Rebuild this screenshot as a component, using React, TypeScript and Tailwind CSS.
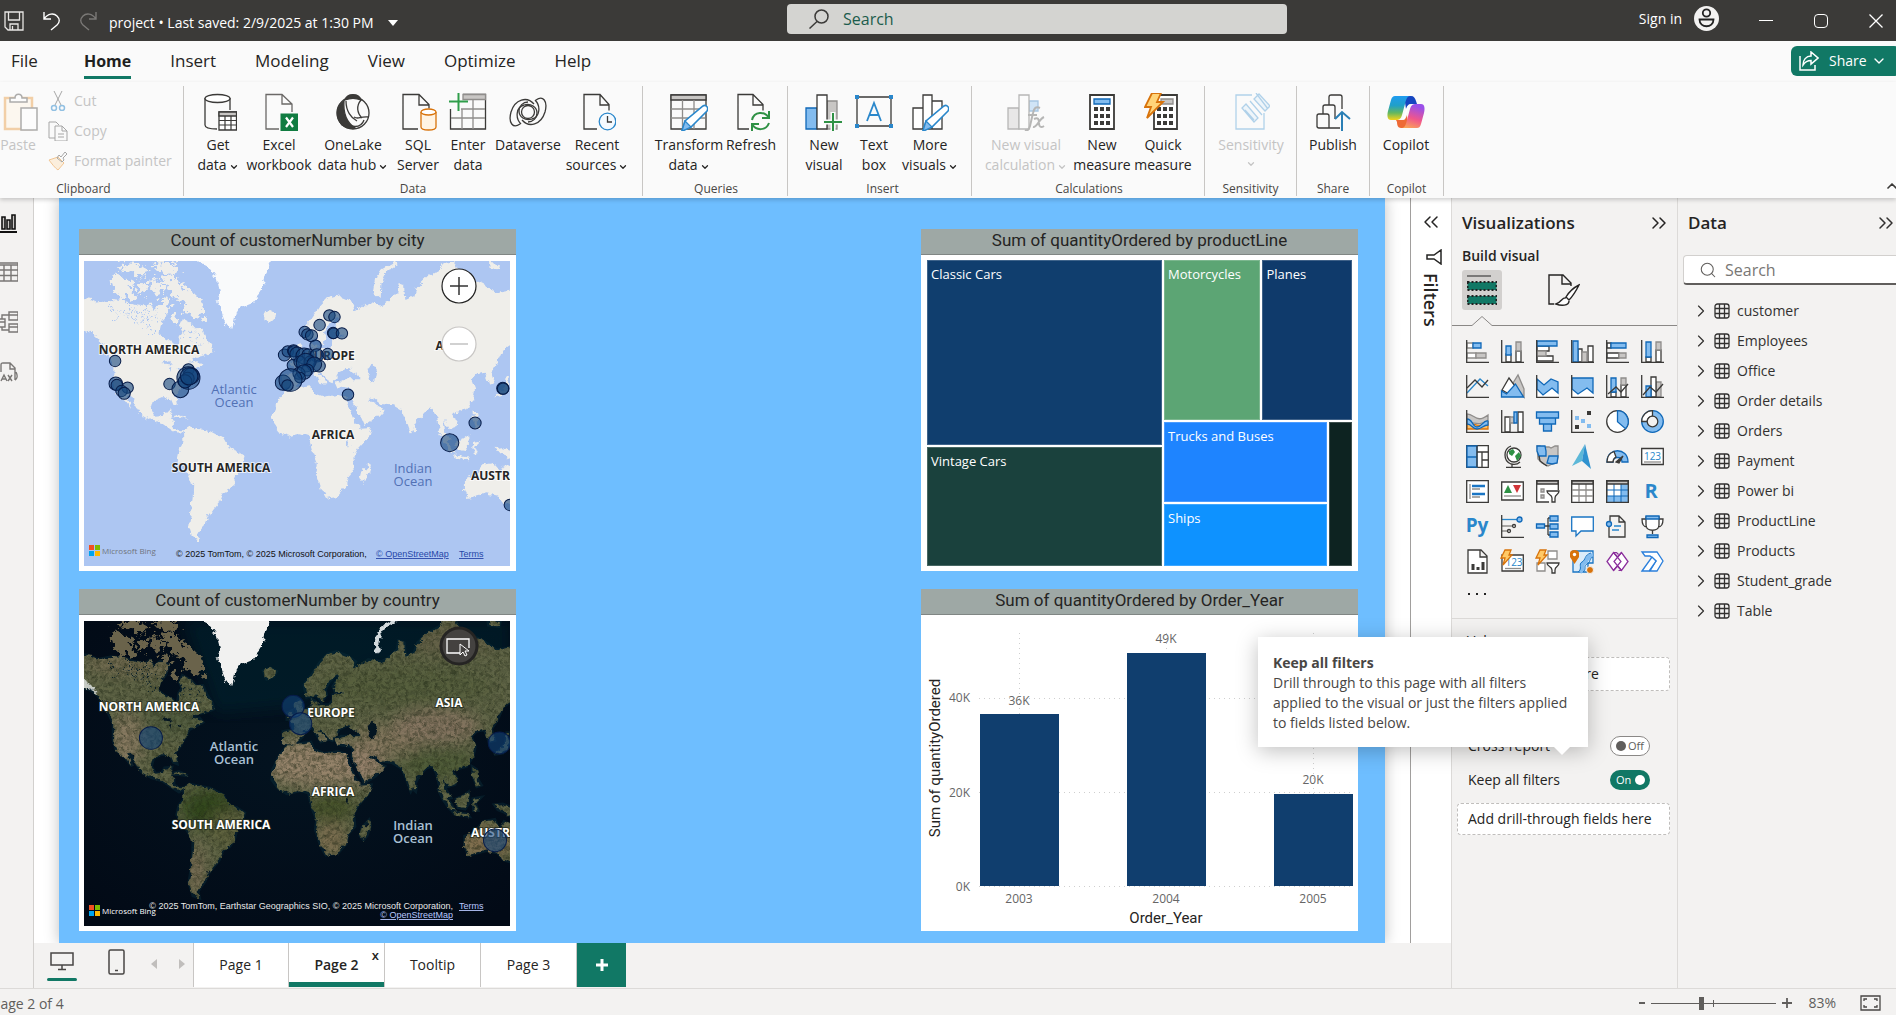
import React from "react";
import {
  ChevronDown,
  ChevronUp,
  ChevronsLeft,
  ChevronsRight,
  ChevronRight,
  Search,
} from "lucide-react";

const D = "#3b3a38";
const B = "#83bcef";
const BS = "#1068b8";
const G = "#c8c6c4";
const GS = "#8f8d8b";

/* ---------- ribbon icons (38 x 38) ---------- */

function RIcon({ children, faded = false }: { children: React.ReactNode; faded?: boolean }) {
  return (
    <svg viewBox="0 0 38 38" fill="none" stroke={D} strokeWidth="1.3" className={faded ? "size-[38px] opacity-35" : "size-[38px]"} aria-hidden="true">
      {children}
    </svg>
  );
}

const ribbonIcons: Record<string, React.ReactNode> = {
  getData: (
    <RIcon>
      <path d="M6 5v27c0 3 5 4 12 4M31 5v12" />
      <ellipse cx="18.500" cy="5.500" rx="12.500" ry="4" fill="#fff" />
      <path d="M20 19h17.500v18H20z" fill="#fff" />
      <path d="M20 19h17.500v4H20z" fill={G} />
      <path d="M20 27.500h17.500M20 32h17.500M26 23v14M32 23v14" strokeWidth="1.200" />
    </RIcon>
  ),
  excel: (
    <RIcon>
      <path d="M19 36H6V1.500h16l10 9.500v8M22 1.500V11h10" stroke="#6b6967" />
      <path d="M20.500 20.500h17.500v17.500h-17.500z" fill="#107c41" stroke="none" />
      <path d="M26 24.500l7 9.500M33 24.500l-7 9.500" stroke="#fff" strokeWidth="2.200" />
    </RIcon>
  ),
  oneLake: (
    <RIcon>
      <circle cx="19" cy="20" r="16" />
      <path d="M11 7C13 0 25 0 27 7c-5-2-11-2-16 0z" fill={D} />
      <path d="M10 8C2 13 1 24 8 32c4 3 9 4 13 3C12 29 9 20 10 8z" fill={D} />
      <path d="M12 8c0 10 5 17 11 20M27 7c-5 6-4 13 1 18M17 33c9 2 12-3 13-6M20 24c5 3 5-1 15 0" />
    </RIcon>
  ),
  sql: (
    <RIcon>
      <path d="M19 36H4V1.500h16l10 10v4M20 1.500v10.500h10" />
      <path d="M22 19v15c0 4 15 4 15 0V19" stroke="#d8730b" fill="#fff4e4" />
      <ellipse cx="29.500" cy="19" rx="7.500" ry="3" stroke="#d8730b" fill="#fff" />
    </RIcon>
  ),
  enter: (
    <RIcon>
      <path d="M14 1.500h22.500v34.500h-35V16" />
      <path d="M14 1.500h22.500v5H14z" fill={G} stroke={GS} />
      <path d="M12 16h24M2 25h34M13 16v20M24 7v29" stroke={GS} />
      <path d="M9.500 -1v19M0 8.500h19" stroke="#2f9e4a" strokeWidth="2" />
    </RIcon>
  ),
  dataverse: (
    <RIcon>
      <circle cx="19" cy="19" r="6.500" />
      <path d="M25 11C18 3 6 6 2 19c-3 11 2 17 9 12M12 31c-6-6-5-17 3-19 7-2 13 2 13 8 0 5-4 9-9 9" />
      <path d="M13 27C20 35 32 32 36 19c3-11-2-17-9-12M26 7c6 6 5 17-3 19-7 2-13-2-13-8 0-5 4-9 9-9" />
    </RIcon>
  ),
  recent: (
    <RIcon>
      <path d="M19 36H6V1.500h16l9 10v6M22 1.500v10.500h9.500" />
      <circle cx="29.500" cy="28.500" r="8.300" stroke="#2a87cb" fill="#f4faff" />
      <path d="M29.500 23v6h4.500" />
    </RIcon>
  ),
  transform: (
    <RIcon>
      <path d="M1 2h35v34H1z" />
      <path d="M1 2h35v5H1z" fill={G} />
      <path d="M1 16h34M1 25h34M12.500 7v29M24 7v29" stroke={GS} />
      <path d="M12 38l3-10 18-15c3-2 6 2 4 5L21 34z" fill="#fff" stroke="#2a87cb" strokeWidth="1.600" />
      <path d="M12 38l3-10 6 6z" fill={B} stroke="#2a87cb" />
    </RIcon>
  ),
  refresh: (
    <RIcon>
      <path d="M17 36H6V1.500h15l10 10v6M21 1.500v10.500h10" />
      <path d="M20 27c2-9 13-9 17-2M37 18v7h-7M37 30c-3 8-13 8-17 1M20 38v-7h7" stroke="#2f9145" strokeWidth="2" />
    </RIcon>
  ),
  newVisual: (
    <RIcon>
      <path d="M22 8h10v28H22z" fill={G} stroke={GS} />
      <path d="M1 15h11v21H1z" fill={B} stroke={BS} />
      <path d="M12 2h10v34H12z" fill="#fff" />
      <path d="M28 19v20M18 29h20" stroke="#fafafa" strokeWidth="5" />
      <path d="M28 20v18M19 29h18" stroke="#2f9145" strokeWidth="2" />
    </RIcon>
  ),
  textBox: (
    <RIcon>
      <path d="M2 4h34v29H2z" />
      <path d="M12 28l7-18 7 18M14.500 22h9" stroke="#2a87cb" strokeWidth="1.800" />
      <path d="M0 2h4v4H0zM34 2h4v4h-4zM0 31h4v4H0zM34 31h4v4h-4z" fill="#2a87cb" stroke="none" />
    </RIcon>
  ),
  moreVisuals: (
    <RIcon>
      <path d="M2 15h10v21H2zM12 2h9v34h-9zM21 8h10v28H21z" fill="#fff" />
      <path d="M12 38l3-10 18-15c3-2 6 2 4 5L21 34z" fill="#fff" stroke="#2a87cb" strokeWidth="1.600" />
      <path d="M12 38l3-10 6 6z" fill={B} stroke="#2a87cb" />
    </RIcon>
  ),
  visualCalc: (
    <RIcon faded>
      <path d="M22 8h9v10h-9z" fill={B} stroke={BS} />
      <path d="M1 15h11v21H1z" fill={G} />
      <path d="M12 2h10v34H12z" fill="#fff" />
      <path d="M33 15c-4-2-6 0-7 5l-3 13c-1 4-3 5-5 4M21 22h9M27 26c4-2 5 0 5 4s2 5 5 3M37 24c-5 2-7 11-11 10" strokeWidth="2" />
    </RIcon>
  ),
  newMeasure: (
    <RIcon>
      <path d="M7 2h24v34H7z" fill="#fff" strokeWidth="1.800" />
      <path d="M11 6h16v5H11z" fill={B} stroke={BS} />
      <path d="M11 16h4M17 16h4M23 16h4M11 23h4M17 23h4M23 23h4M11 30h4M17 30h4M23 30h4" strokeWidth="4" />
    </RIcon>
  ),
  quickMeasure: (
    <RIcon>
      <path d="M10 2h23v34H10z" fill="#fff" strokeWidth="1.800" />
      <path d="M17 6h12v5H17z" fill={G} stroke={GS} />
      <path d="M13 16h4M19 16h4M25 16h4M13 23h4M19 23h4M25 23h4M13 30h4M19 30h4M25 30h4" strokeWidth="4" />
      <path d="M8 0h9l-4 9h6L3 25l4-11H1z" fill="#ffd479" stroke="#d8730b" strokeWidth="1.800" />
    </RIcon>
  ),
  sensitivity: (
    <RIcon faded>
      <path d="M20 2H4v34h28V20" stroke="#2a87cb" />
      <path d="M10 15l12 14 4-4-12-14zM13 17l9 10M22 6l5-5 11 12-5 5zM24 0l12 16M18 8l12 14" stroke="#2a87cb" fill="#d9ecfa" />
    </RIcon>
  ),
  publish: (
    <RIcon>
      <path d="M3 34V23c0-2 1-2 2-2h8c2 0 2 1 2 2v12H5c-2 0-2-1-2-2zM9 21v-7c0-2 1-2 2-2h8c2 0 2 1 2 2v12M15 12V4c0-2 1-2 2-2h9c2 0 2 1 2 2v12M15 35h11" />
      <path d="M28 38V20M21 26l7-7 8 7" stroke="#2a7fb5" strokeWidth="2" />
    </RIcon>
  ),
  copilot: (
    <svg viewBox="0 0 38 38" className="size-[38px]" aria-hidden="true">
      <defs>
        <linearGradient id="cpA" x1="0" y1="0" x2="0" y2="1">
          <stop offset="0" stopColor="#1f9bf0" />
          <stop offset="0.400" stopColor="#20a0c8" />
          <stop offset="0.700" stopColor="#63b760" />
          <stop offset="1" stopColor="#f5d31a" />
        </linearGradient>
        <linearGradient id="cpB" x1="0.300" y1="0" x2="0" y2="1">
          <stop offset="0" stopColor="#9b4fe8" />
          <stop offset="0.500" stopColor="#f0568c" />
          <stop offset="1" stopColor="#fcae50" />
        </linearGradient>
      </defs>
      <path d="M17 3h7c3 0 4 2 5 5l1 3h-6c-3 0-4 2-5 5z" fill="#1545c0" />
      <path d="M21 35h-7c-3 0-4-3-4-6l-1-2h6c3 0 4-2 5-5z" fill="#ee6a35" />
      <path d="M8 3h15c-3 0-4 4-5 8l-3 11c-1 4-3 5-6 5H4c-4 0-4-5-3-9l3-11c1-3 2-4 4-4z" fill="url(#cpA)" />
      <path d="M30 35H15c3 0 4-4 5-8l3-11c1-4 3-5 6-5h5c4 0 4 5 3 9l-3 11c-1 3-2 4-4 4z" fill="url(#cpB)" />
      <path d="M24 11.500c-2 .5-3 2-3.500 4.500l-3 10.500H14.500c2-1 2.500-3 3-5l2.500-7c.5-1.500 2-3 4-3z" fill="#fff" />
    </svg>
  ),
};

/* ---------- ribbon ---------- */

type Item = { icon: string; lines: string[]; w: string; menu?: boolean; off?: boolean };
type Group = { name: string; pad: string; items: Item[] };

const groups: Group[] = [
  {
    name: "Data",
    pad: "w-[459px] pl-1.5",
    items: [
      { icon: "getData", lines: ["Get", "data"], w: "w-14", menu: true },
      { icon: "excel", lines: ["Excel", "workbook"], w: "w-[66px]" },
      { icon: "oneLake", lines: ["OneLake", "data hub"], w: "w-[82px]", menu: true },
      { icon: "sql", lines: ["SQL", "Server"], w: "w-12" },
      { icon: "enter", lines: ["Enter", "data"], w: "w-[52px]" },
      { icon: "dataverse", lines: ["Dataverse"], w: "w-[68px]" },
      { icon: "recent", lines: ["Recent", "sources"], w: "w-[70px]", menu: true },
    ],
  },
  {
    name: "Queries",
    pad: "w-[145px] pl-2",
    items: [
      { icon: "transform", lines: ["Transform", "data"], w: "w-[76px]", menu: true },
      { icon: "refresh", lines: ["Refresh"], w: "w-12" },
    ],
  },
  {
    name: "Insert",
    pad: "w-[184px] pl-3",
    items: [
      { icon: "newVisual", lines: ["New", "visual"], w: "w-12" },
      { icon: "textBox", lines: ["Text", "box"], w: "w-[52px]" },
      { icon: "moreVisuals", lines: ["More", "visuals"], w: "w-[60px]", menu: true },
    ],
  },
  {
    name: "Calculations",
    pad: "w-[233px] pl-2",
    items: [
      { icon: "visualCalc", lines: ["New visual", "calculation"], w: "w-[92px]", menu: true, off: true },
      { icon: "newMeasure", lines: ["New", "measure"], w: "w-[60px]" },
      { icon: "quickMeasure", lines: ["Quick", "measure"], w: "w-[62px]" },
    ],
  },
  {
    name: "Sensitivity",
    pad: "w-[92px] pl-1.5",
    items: [{ icon: "sensitivity", lines: ["Sensitivity", ""], w: "w-20", menu: true, off: true }],
  },
  { name: "Share", pad: "w-[73px] pl-1.5", items: [{ icon: "publish", lines: ["Publish"], w: "w-[60px]" }] },
  { name: "Copilot", pad: "w-[74px] pl-1.5", items: [{ icon: "copilot", lines: ["Copilot"], w: "w-[60px]" }] },
];

function RibbonItem({ item }: { item: Item }) {
  return (
    <button type="button" className={`${item.w} flex shrink-0 flex-col items-center whitespace-nowrap text-sm leading-5 ${item.off ? "text-[#c4c4c4]" : "text-[#252423]"}`}>
      {ribbonIcons[item.icon]}
      <span className="mt-1">{item.lines[0]}</span>
      {item.lines.length > 1 && (
        <span className="flex items-center gap-0.5">
          {item.lines[1]}
          {item.menu && <ChevronDown size={10} strokeWidth={3} className="mt-1" />}
        </span>
      )}
    </button>
  );
}

function Ribbon() {
  return (
    <div className="relative z-10 flex h-[116px] shrink-0 bg-[#fafafa] pt-1 shadow-[0_2px_4px_rgba(0,0,0,0.18)]">
      <section className="flex h-[110px] w-[184px] shrink-0 flex-col justify-between border-r border-[#c8c6c4] text-sm leading-5 text-[#c4c4c4]">
        <div className="flex pt-[7px]">
          <button type="button" className="flex w-9 flex-col items-center">
            <svg viewBox="0 0 38 38" className="ml-1 size-[38px] opacity-40" fill="none" strokeWidth="1.500" stroke={D} aria-hidden="true">
              <path d="M4 5h27v31H4z" stroke="#e8912d" fill="#fff3df" strokeWidth="2.500" />
              <path d="M9 9V5h5c0-5 7-5 7 0h5v4z" fill="#fff" />
              <path d="M20 15h16v22H20z" fill="#fff" />
            </svg>
            <span className="mt-1">Paste</span>
          </button>
          <div className="-mt-[7px] flex flex-col pl-3">
            <button type="button" className="flex h-[30px] items-center gap-1.5">
              <svg viewBox="0 0 20 20" className="size-5 opacity-50" fill="none" stroke="#555" aria-hidden="true">
                <path d="M6 0l7 14M14 0L7 14" />
                <circle cx="6" cy="17" r="2.500" stroke="#2a87cb" strokeWidth="1.500" />
                <circle cx="14" cy="17" r="2.500" stroke="#2a87cb" strokeWidth="1.500" />
              </svg>
              Cut
            </button>
            <button type="button" className="flex h-[30px] items-center gap-1.5">
              <svg viewBox="0 0 20 20" className="size-5 opacity-50" fill="none" stroke="#555" aria-hidden="true">
                <path d="M7 17H1V1h7l3 3M7 5h7l5 5v10H7zM14 5v5h5M10 13h6M10 16h6" />
              </svg>
              Copy
            </button>
            <button type="button" className="flex h-[30px] items-center gap-1.5">
              <svg viewBox="0 0 20 20" className="size-5 opacity-50" fill="none" stroke="#555" aria-hidden="true">
                <path d="M1 9l9-3 6 6-6 7c-3-2-6-6-9-10z" fill="#fde3c0" stroke="#e8912d" />
                <path d="M9 7l2-3 2 2 4-5 2 2-4 4 1 2-2 2z" />
              </svg>
              Format painter
            </button>
          </div>
        </div>
        <h2 className="pr-4 text-center text-xs leading-[14px] text-[#484644]">Clipboard</h2>
      </section>
      {groups.map((g) => (
        <section key={g.name} className={`${g.pad} flex h-[110px] shrink-0 flex-col justify-between border-r border-[#c8c6c4]`}>
          <div className="flex pt-[7px]">
            {g.items.map((i) => (
              <RibbonItem key={i.icon} item={i} />
            ))}
          </div>
          <h2 className="pr-1.5 text-center text-xs leading-[14px] text-[#484644]">{g.name}</h2>
        </section>
      ))}
      <button type="button" aria-label="Collapse ribbon" className="-mr-1 mb-1 ml-auto self-end">
        <ChevronUp size={16} strokeWidth={2.500} color={D} />
      </button>
    </div>
  );
}

/* ---------- title bar and menu tabs ---------- */

function TitleBar() {
  return (
    <header className="grid h-[41px] shrink-0 grid-cols-[787px_minmax(0,500px)_1fr] items-center bg-[#3b3a38] text-sm text-white">
      <div className="flex items-center pl-1">
        <button type="button" aria-label="Save">
          <svg viewBox="0 0 20 20" className="size-5" fill="none" stroke="#e8e6e4" strokeWidth="1.300" aria-hidden="true">
            <path d="M1 1h18v18H4l-3-3zM4.500 1v8h11V1M6 19v-6h8v6M8.500 19v-4" />
          </svg>
        </button>
        <button type="button" aria-label="Undo" className="ml-[18px]">
          <svg viewBox="0 0 20 20" className="size-5" fill="none" stroke="#fff" strokeWidth="1.400" aria-hidden="true">
            <path d="M2 1v7h7M2 8c4-6 10-6 13-3s3 6 0 9l-6 5" />
          </svg>
        </button>
        <button type="button" aria-label="Redo" className="ml-4">
          <svg viewBox="0 0 20 20" className="size-5" fill="none" stroke="#7b7977" strokeWidth="1.400" aria-hidden="true">
            <path d="M18 1v7h-7M18 8C14 2 8 2 5 5s-3 6 0 9l6 5" />
          </svg>
        </button>
        <button type="button" className="ml-[11px] mt-1 flex items-center gap-3.5 whitespace-nowrap">
          project • Last saved: 2/9/2025 at 1:30 PM
          <svg viewBox="0 0 10 6" className="h-1.5 w-2.5" fill="#fff" aria-hidden="true">
            <path d="M0 0h10L5 6z" />
          </svg>
        </button>
      </div>
      <label className="-mt-1 flex h-[30px] items-center gap-3.5 rounded-sm bg-[#d4d4d1] pl-[22px]">
        <svg viewBox="0 0 20 20" className="size-5 shrink-0" fill="none" stroke="#3b3a38" strokeWidth="1.500" aria-hidden="true">
          <circle cx="12.500" cy="7.500" r="6.500" />
          <path d="M8 12.500L.5 19.500" />
        </svg>
        <input type="search" aria-label="Search" placeholder="Search" className="w-full bg-transparent text-base text-[#1c5c4c] outline-none placeholder:text-[#1c5c4c]" />
      </label>
      <div className="-mt-1 flex items-center justify-end pr-[13px]">
        <button type="button" className="flex items-center gap-3 whitespace-nowrap">
          Sign in
          <svg viewBox="0 0 25 25" className="size-[25px]" fill="none" stroke="#222" strokeWidth="1.800" aria-hidden="true">
            <circle cx="12.500" cy="12.500" r="12.500" fill="#f3f2f1" stroke="none" />
            <circle cx="12.500" cy="7" r="3.700" />
            <path d="M5.500 13.500h14c0 9-14 9-14 0z" />
          </svg>
        </button>
        <button type="button" aria-label="Minimize" className="ml-10 mt-1 flex h-4 w-[14px] items-center">
          <span className="h-px w-full bg-white" />
        </button>
        <button type="button" aria-label="Maximize" className="ml-[41px] mt-1 size-[14px] rounded-sm border border-white" />
        <button type="button" aria-label="Close" className="ml-[41px] mt-1">
          <svg viewBox="0 0 14 14" className="size-[14px]" stroke="#fff" strokeWidth="1.300" aria-hidden="true">
            <path d="M.5 .5l13 13M13.500 .5l-13 13" />
          </svg>
        </button>
      </div>
    </header>
  );
}

function MenuTabs() {
  return (
    <nav className="flex h-[41px] shrink-0 items-start bg-[#fafafa] pl-[11px] text-[17px] leading-6 text-[#252423]">
      <button type="button" className="mr-[46px] pt-2">File</button>
      <div className="flex items-start gap-[39px]">
        <button type="button" className="border-b-[3px] border-[#117865] pb-[3px] pt-2 text-base font-bold leading-6 text-[#201f1e]">Home</button>
        {["Insert", "Modeling", "View", "Optimize", "Help"].map((t) => (
          <button key={t} type="button" className="pt-2">{t}</button>
        ))}
      </div>
      <button type="button" className="-mr-1 ml-auto mt-[5px] flex h-[30px] w-[109px] items-center gap-2.5 rounded-md bg-[#117865] pl-2 text-sm text-white">
        <svg viewBox="0 0 20 20" className="size-5" fill="none" stroke="#fff" strokeWidth="1.500" aria-hidden="true">
          <path d="M1 5v14h15v-5M12 5V1l7 6-7 6V9.500C8 9.500 6 11 4 14c0-5 3-9 8-9z" />
        </svg>
        <span className="flex items-center gap-1">
          Share
          <ChevronDown size={16} strokeWidth={2} />
        </span>
      </button>
    </nav>
  );
}

/* ---------- maps ---------- */

const ARCTIC = [
  "M480 245L510 240 530 262 562 282 592 312 607 345 596 376 572 358 546 350 540 320 515 305 500 282Z",
  "M330 248L350 236 382 252 408 292 390 312 350 302 335 275Z",
  "M342 212L370 200 400 204 430 218 424 240 390 232Z",
  "M440 208L500 198 532 216 520 236 470 228Z",
  "M450 250L482 252 484 290 462 300 446 272Z",
  "M412 250L436 262 432 296 412 288Z",
  "M455 195L530 195 500 205Z",
  "M496 355L520 350 528 370 508 380Z",
  "M470 318L498 308 506 326 486 336Z",
].join("");

const ICE =
  "M1104 288L1110 250 1130 220 1172 196 1176 206 1142 230 1126 264 1124 306Z";

const LAND = [
  "M240 305L265 308 290 320 330 312 370 316 400 327 430 332 445 322 455 342 475 325 500 335 490 365 470 392 466 412 490 430 512 440 518 458 527 440 530 420 540 405 532 388 540 368 565 382 582 400 600 398 612 425 628 450 632 468 608 478 585 482 560 500 590 495 600 508 578 520 560 530 546 555 535 578 518 598 524 632 514 628 505 606 480 603 455 614 448 640 460 662 480 660 488 645 508 643 500 672 515 678 514 695 530 706 546 705 530 716 508 702 482 684 450 674 420 656 402 630 386 604 375 596 392 640 370 612 345 592 336 562 336 512 326 490 310 460 292 430 272 412 240 402Z",
  "M780 354L800 345 818 355 810 370 790 378Z",
  "M545 705L562 694 590 700 622 706 660 726 676 756 700 764 724 780 716 808 700 832 694 858 680 880 660 890 648 922 630 944 616 962 606 986 594 1002 586 1016 590 1034 572 1028 560 990 566 950 571 900 572 862 558 838 540 810 524 785 530 758 546 738Z",
  "M850 578L872 574 920 568 928 590 960 602 1000 596 1024 604 1036 642 1052 680 1070 698 1098 696 1090 722 1060 756 1046 782 1050 820 1030 842 1024 872 1000 900 965 906 950 880 934 830 938 800 926 770 918 740 914 720 890 712 850 722 824 706 805 680 808 650 826 610Z",
  "M1092 802L1096 818 1086 848 1076 860 1066 848 1072 824Z",
  "M838 536L872 530 866 510 856 500 880 492 896 476 912 466 926 455 922 438 932 444 945 457 975 455 986 440 986 426 1010 424 1020 416 992 416 986 400 1004 372 996 364 975 385 962 410 966 425 952 446 940 428 925 427 908 432 900 396 920 370 946 330 970 304 996 296 1030 310 1052 326 1040 346 1072 336 1090 320 1130 326 1152 314 1176 290 1180 264 1196 270 1200 312 1226 300 1236 270 1262 244 1300 222 1320 200 1345 195 1362 236 1400 250 1430 264 1470 292 1520 282 1520 440 1488 462 1472 500 1454 528 1464 562 1448 566 1434 530 1410 534 1394 550 1406 580 1400 610 1380 640 1352 648 1336 652 1352 676 1346 694 1326 700 1312 670 1318 708 1334 734 1320 736 1302 702 1292 660 1280 638 1260 646 1240 668 1228 692 1216 714 1202 674 1190 646 1160 628 1126 624 1106 608 1092 604 1108 626 1138 640 1112 668 1078 690 1062 652 1042 612 1046 592 1040 580 1000 574 994 560 1010 550 1064 550 1060 536 1030 516 1004 528 994 546 984 562 970 556 950 526 944 532 966 560 950 566 926 524 906 530 894 552 872 574 850 574 838 570Z",
  "M872 455L886 440 896 465 906 490 880 500 866 496 880 478Z",
  "M850 480L864 474 864 494 850 498Z",
  "M1462 604L1478 592 1496 572 1500 540 1509 540 1506 576 1488 600Z",
  "M1296 706L1312 722 1334 752 1346 776 1332 768 1312 740Z",
  "M1340 776L1384 784 1388 790 1346 784Z",
  "M1350 738L1370 730 1386 718 1388 750 1376 768 1356 764Z",
  "M1398 642L1410 650 1412 676 1424 696 1412 700 1400 668Z",
  "M1400 738L1422 734 1406 750 1414 772 1402 772Z",
  "M1464 756L1488 754 1520 766 1520 796 1494 778 1474 770Z",
  "M1376 850L1400 842 1432 806 1464 800 1478 832 1492 806 1520 820 1520 930 1490 920 1474 900 1440 892 1386 906 1376 880Z",
  "M1444 200L1480 205 1476 220 1446 216Z",
  "M1224 696L1232 700 1230 714 1224 708Z",
  "M500 664L530 656 556 668 530 664Z",
].join("");

const GREENLAND =
  "M576 190L800 190 782 256 772 290 746 322 712 336 696 362 688 398 670 390 656 350 640 318 652 290 642 248 618 214Z";
const INLAND_SEA = "M1088 518L1104 506 1116 528 1110 562 1096 556ZM478 500L500 494 512 506 496 504ZM502 512L510 510 508 528ZM520 516L540 512 528 522ZM1024 738L1036 736 1030 752Z";
const LAKES = "M330 330L350 372M380 322L402 350 398 392M420 345L440 392 452 420M430 330L470 350 460 380M400 345L470 368M360 345L420 380M540 420L580 410M560 440L600 440";

type Dot = [number, number, number];

function Bubbles({ dots }: { dots: Dot[] }) {
  return (
    <g fill="#12447c" fillOpacity="0.600" stroke="#071c49" strokeWidth="3">
      {dots.map(([x, y, r]) => (
        <circle key={`${x}-${y}`} cx={x} cy={y} r={r} />
      ))}
    </g>
  );
}

const cityDots: Dot[] = [
  [341, 495, 17], [343, 563, 20], [346, 567, 17], [378, 575, 17], [360, 585, 17], [368, 592, 18],
  [502, 564, 17], [558, 520, 17], [534, 580, 25], [558, 546, 34], [566, 540, 24], [556, 548, 19], [548, 556, 20], [560, 541, 26],
  [975, 358, 17], [990, 363, 17], [946, 387, 17], [902, 408, 17], [910, 415, 17], [922, 419, 18], [986, 411, 17], [987, 412, 16],
  [1012, 412, 17], [934, 449, 17], [842, 477, 18], [852, 466, 17], [869, 464, 18], [870, 466, 17], [880, 475, 22], [900, 480, 24], [912, 476, 18],
  [938, 478, 20], [970, 474, 17], [945, 510, 18], [868, 508, 18], [888, 498, 18], [918, 498, 18], [905, 500, 28], [930, 505, 22],
  [910, 522, 18], [885, 532, 18], [900, 528, 22], [888, 545, 16], [838, 560, 23], [860, 552, 34], [851, 568, 17],
  [1030, 596, 17], [1488, 577, 18], [1489, 578, 17], [1406, 681, 18], [1331, 740, 27], [1509, 927, 17],
];
const countryDots: Dot[] = [
  [447, 546, 34], [868, 451, 33], [890, 503, 33], [1478, 561, 33], [1465, 853, 34],
];

function BingMark({ y, fill }: { y: number; fill: string }) {
  return (
    <g>
      <path d={`M5 ${y}h5v5h-5z`} fill="#f25022" />
      <path d={`M11 ${y}h5v5h-5z`} fill="#7fba00" />
      <path d={`M5 ${y + 6}h5v5h-5z`} fill="#00a4ef" />
      <path d={`M11 ${y + 6}h5v5h-5z`} fill="#ffb900" />
      <text x="18" y={y + 9} fontSize="8" fill={fill}>Microsoft Bing</text>
    </g>
  );
}

function MapLabels({ dy, dark }: { dy: number; dark: boolean }) {
  return (
    <g textAnchor="middle" transform={`translate(0 ${dy})`}>
      <g
        fontSize="12"
        fontWeight="700"
        fill={dark ? "#ffffff" : "#262626"}
        stroke={dark ? "#20281c" : "#ffffff"}
        strokeWidth="2"
        strokeOpacity="0.700"
        paintOrder="stroke"
      >
        <text x="65" y="93">NORTH AMERICA</text>
        <text x="247" y="99">EUROPE</text>
        <text x="365" y="89">ASIA</text>
        <text x="249" y="178">AFRICA</text>
        <text x="137" y="211">SOUTH AMERICA</text>
        <text x="387" y="219" textAnchor="start">AUSTRALIA</text>
      </g>
      <g fontSize="13" fill={dark ? "#a9c0d4" : "#5271b5"} fontWeight={dark ? 600 : 400}>
        <text x="150" y="133">Atlantic</text>
        <text x="150" y="146">Ocean</text>
        <text x="329" y="212">Indian</text>
        <text x="329" y="225">Ocean</text>
      </g>
    </g>
  );
}

function CityMap() {
  return (
    <svg viewBox="0 0 426 305" className="block h-auto w-full overflow-hidden" role="img" aria-label="Map of customers by city">
      <defs>
        <filter id="coast" x="-5%" y="-5%" width="110%" height="110%" colorInterpolationFilters="sRGB">
          <feTurbulence type="fractalNoise" baseFrequency="0.05" numOctaves="4" seed="4" result="n" />
          <feDisplacementMap in="SourceGraphic" in2="n" scale="22" xChannelSelector="R" yChannelSelector="G" />
        </filter>
        <filter id="islands" x="-10%" y="-10%" width="120%" height="120%" colorInterpolationFilters="sRGB">
          <feTurbulence type="fractalNoise" baseFrequency="0.06" numOctaves="4" seed="9" result="n" />
          <feDisplacementMap in="SourceGraphic" in2="n" scale="60" xChannelSelector="R" yChannelSelector="G" />
        </filter>
      </defs>
      <rect width="426" height="305" fill="#adc6f2" />
      <g transform="scale(0.338 0.3333) translate(-249 -195)">
        <path d={ARCTIC} fill="#efeeea" filter="url(#islands)" />
        <g filter="url(#coast)">
          <path d={LAND} fill="#efeeea" />
          <path d={ICE} fill="#efeeea" />
          <path d={GREENLAND} fill="#f9fafb" />
          <path d={INLAND_SEA} fill="#adc6f2" />
        </g>
        <path d={LAKES} fill="none" stroke="#adc6f2" strokeWidth="5" strokeDasharray="9 11 4 8" filter="url(#islands)" />
      </g>
      <MapLabels dy={0} dark={false} />
      <g transform="scale(0.338 0.3333) translate(-249 -195)">
        <Bubbles dots={cityDots} />
      </g>
      <circle cx="375" cy="25" r="17" fill="#fff" stroke="#222" strokeWidth="1.200" />
      <path d="M366 25h18M375 16v18" stroke="#333" strokeWidth="1.500" />
      <circle cx="375" cy="83" r="17" fill="#fff" stroke="#c8c6c4" strokeWidth="1.200" />
      <path d="M366 83h18" stroke="#c2c2c2" strokeWidth="1.500" />
      <BingMark y={284} fill="#70757d" />
      <g fontSize="9" fontFamily="Liberation Sans, Arial, sans-serif" fill="#111">
        <text x="92" y="296">© 2025 TomTom, © 2025 Microsoft Corporation,</text>
        <a href="#osm"><text x="292" y="296" fill="#2746a8" textDecoration="underline">© OpenStreetMap</text></a>
        <a href="#terms"><text x="375" y="296" fill="#2746a8" textDecoration="underline">Terms</text></a>
      </g>
    </svg>
  );
}

function CountryMap() {
  return (
    <svg viewBox="0 0 426 305" className="block h-auto w-full overflow-hidden" role="img" aria-label="Map of customers by country">
      <defs>
        <filter id="terrain" x="0" y="0" width="100%" height="100%" colorInterpolationFilters="sRGB">
          <feTurbulence type="fractalNoise" baseFrequency="0.09" numOctaves="4" seed="8" />
          <feColorMatrix values="0 0 0 0 0.12  0 0 0 0 0.15  0 0 0 0 0.08  1.200 0 0 0 -0.420" />
        </filter>
        <filter id="soft"><feGaussianBlur stdDeviation="20" /></filter>
        <radialGradient id="deep" cx="0.500" cy="0.450" r="0.700">
          <stop offset="0" stopColor="#031320" />
          <stop offset="1" stopColor="#020a16" />
        </radialGradient>
        <clipPath id="landClip"><path d={LAND} /></clipPath>
      </defs>
      <rect width="426" height="305" fill="url(#deep)" />
      <g transform="scale(0.338 0.3333) translate(-249 -204)">
        <path d="M540 200H1509V320L1100 340 860 460 640 480 600 360Z" fill="#06222e" opacity="0.600" filter="url(#soft)" />
        <path d={LAND} fill="none" stroke="#0a2a36" strokeWidth="10" opacity="0.500" />
        <path d={ARCTIC} fill="#6a634b" filter="url(#islands)" />
        <g filter="url(#coast)">
          <g clipPath="url(#landClip)">
            <rect x="240" y="190" width="1290" height="860" fill="#5f6446" />
            <g filter="url(#soft)">
              <ellipse cx="400" cy="330" rx="160" ry="40" fill="#716a50" />
              <ellipse cx="375" cy="560" rx="45" ry="80" fill="#877960" />
              <ellipse cx="520" cy="500" rx="90" ry="50" fill="#525d3f" />
              <ellipse cx="620" cy="770" rx="85" ry="60" fill="#33471f" />
              <ellipse cx="670" cy="830" rx="50" ry="60" fill="#5f623c" />
              <ellipse cx="580" cy="950" rx="25" ry="80" fill="#7a6d54" />
              <ellipse cx="940" cy="630" rx="170" ry="70" fill="#95836b" />
              <ellipse cx="1080" cy="630" rx="60" ry="60" fill="#94806a" />
              <ellipse cx="980" cy="765" rx="70" ry="40" fill="#46532b" />
              <ellipse cx="980" cy="860" rx="50" ry="50" fill="#7a6d50" />
              <ellipse cx="1150" cy="560" rx="100" ry="45" fill="#81745b" />
              <ellipse cx="1290" cy="520" rx="130" ry="50" fill="#857560" />
              <ellipse cx="1200" cy="400" rx="260" ry="60" fill="#575f3e" />
              <ellipse cx="1330" cy="260" rx="160" ry="45" fill="#646047" />
              <ellipse cx="1300" cy="635" rx="110" ry="45" fill="#4f5b38" />
              <ellipse cx="1440" cy="870" rx="80" ry="50" fill="#83704f" />
            </g>
            <rect x="240" y="190" width="1290" height="860" filter="url(#terrain)" />
          </g>
          <path d={GREENLAND} fill="#f1f1f0" />
          <path d="M1120 300C1104 256 1128 216 1174 200" fill="none" stroke="#d3dadd" strokeWidth="11" />
          <path d="M240 378L270 396 288 424 240 398Z" fill="#e4e7e6" opacity="0.800" />
          <path d={INLAND_SEA} fill="#041521" />
        </g>
        <path d={LAKES} fill="none" stroke="#0b2028" strokeWidth="4" strokeDasharray="9 11 4 8" filter="url(#islands)" />
      </g>
      <MapLabels dy={-3} dark />
      <g transform="scale(0.338 0.3333) translate(-249 -195)">
        <Bubbles dots={countryDots} />
      </g>
      <circle cx="375" cy="25" r="18" fill="#444240" stroke="#252423" strokeWidth="3" />
      <path d="M377 32h-14V18h22v9" fill="none" stroke="#fff" strokeWidth="1.300" />
      <path d="M376 23v11l3-3 2 4 2-1-2-4h4z" fill="#444240" stroke="#fff" strokeWidth="1" />
      <BingMark y={284} fill="#fff" />
      <g fontSize="9" fontFamily="Liberation Sans, Arial, sans-serif" fill="#e8e8e8">
        <text x="369" y="288" textAnchor="end">© 2025 TomTom, Earthstar Geographics SIO, © 2025 Microsoft Corporation,</text>
        <a href="#osm"><text x="369" y="297" textAnchor="end" fill="#b8c8ff" textDecoration="underline">© OpenStreetMap</text></a>
        <a href="#terms"><text x="375" y="288" fill="#b8c8ff" textDecoration="underline">Terms</text></a>
      </g>
    </svg>
  );
}

/* ---------- charts ---------- */

function Cell({ label, className }: { label: string; className: string }) {
  return <div className={`${className} min-h-0 min-w-0 px-1 pt-[5px] text-[13px] leading-[18px] text-white ring-1 ring-inset ring-white/20`}>{label}</div>;
}

function Treemap() {
  return (
    <div className="grid h-[306px] grid-cols-[235fr_188fr] gap-0.5">
      <div className="grid grid-rows-[185fr_119fr] gap-0.5">
        <Cell label="Classic Cars" className="bg-[#103e6e]" />
        <Cell label="Vintage Cars" className="bg-[#1a413d]" />
      </div>
      <div className="grid grid-rows-[160fr_144fr] gap-0.5">
        <div className="grid grid-cols-[97fr_90fr] gap-0.5">
          <Cell label="Motorcycles" className="bg-[#5ca574]" />
          <Cell label="Planes" className="bg-[#0f3a6b]" />
        </div>
        <div className="grid grid-cols-[165fr_23fr] gap-0.5">
          <div className="grid grid-rows-[81fr_62fr] gap-0.5">
            <Cell label="Trucks and Buses" className="bg-[#1e84ff]" />
            <Cell label="Ships" className="bg-[#0e92ff]" />
          </div>
          <Cell label="" className="bg-[#0d2321]" />
        </div>
      </div>
    </div>
  );
}

const bars = [
  { year: "2003", label: "36K", x: 59, top: 99, ly: 90 },
  { year: "2004", label: "49K", x: 206, top: 38, ly: 28 },
  { year: "2005", label: "20K", x: 353, top: 179, ly: 169 },
];

function YearChart() {
  return (
    <svg viewBox="0 0 437 316" className="block h-auto w-full" role="img" aria-label="Quantity ordered per year">
      <g stroke="#cfcfcf" strokeDasharray="1 4">
        <path d="M58 83.500H432M58 177.500H432M58 271.500H432" />
        <path d="M98.500 18V99M245.500 18V38M392.500 18V179" />
      </g>
      <g fontSize="12" fill="#666">
        <text x="49" y="87" textAnchor="end">40K</text>
        <text x="49" y="182" textAnchor="end">20K</text>
        <text x="49" y="276" textAnchor="end">0K</text>
        {bars.map((b) => (
          <g key={b.year} textAnchor="middle">
            <rect x={b.x} y={b.top} width="79" height={271 - b.top} fill="#103e6e" />
            <text x={b.x + 39} y={b.ly}>{b.label}</text>
            <text x={b.x + 39} y="288">{b.year}</text>
          </g>
        ))}
      </g>
      <g fontSize="15" fill="#252423" fontFamily="Roboto, sans-serif" textAnchor="middle">
        <text x="245" y="308">Order_Year</text>
        <text transform="translate(19 143) rotate(-90)">Sum of quantityOrdered</text>
      </g>
    </svg>
  );
}

function Card({ title, pad, children }: { title: string; pad: string; children: React.ReactNode }) {
  return (
    <article className="bg-white">
      <h3 className="h-[26px] whitespace-nowrap border-b border-[#808684] bg-[#9ea8a5] text-center font-[Roboto] text-[17px] leading-[22px] text-[#252423]">{title}</h3>
      <div className={pad}>{children}</div>
    </article>
  );
}

/* ---------- left rail ---------- */

function LeftRail() {
  const cls = "h-6 w-[26px] -ml-2";
  return (
    <nav className="flex w-[34px] shrink-0 flex-col gap-[26px] border-r border-[#d2d0ce] bg-[#f3f2f1] pt-3">
      <button type="button" aria-label="Report view">
        <svg viewBox="0 0 26 24" className={cls} fill="none" stroke="#111" strokeWidth="1.600" aria-hidden="true">
          <path d="M4 2v20h21" strokeWidth="2" />
          <path d="M10 7h3v12h-3zM15 10h3v9h-3zM20 5h3v14h-3z" fill={G} />
        </svg>
      </button>
      <button type="button" aria-label="Table view">
        <svg viewBox="0 0 26 24" className={cls} fill="none" stroke="#797775" strokeWidth="1.400" aria-hidden="true">
          <path d="M2 3h24v18H2zM2 5h24M2 10h24M2 15.500h24M12 5v16M19 5v16" />
        </svg>
      </button>
      <button type="button" aria-label="Model view">
        <svg viewBox="0 0 26 24" className={cls} fill="none" stroke="#797775" strokeWidth="1.400" aria-hidden="true">
          <path d="M17 2h9v8h-9zM17 5h9M17 14h9v8h-9zM17 17h9M4 9h9v8H4zM4 12h9M10 9V5h7M10 17v3h7" />
        </svg>
      </button>
      <button type="button" aria-label="DAX query view">
        <svg viewBox="0 0 26 24" className={cls} fill="none" stroke="#797775" strokeWidth="1.400" aria-hidden="true">
          <path d="M9 12V5c0-2 1-2 2-2h7l5 5v12M18 3v6h5M24 12c2 4 1 7-1 8M4 15v6M9 21l3-6 3 6M10 19h4M16 15l4 6M20 15l-4 6" />
        </svg>
      </button>
    </nav>
  );
}

/* ---------- visualization gallery (23 x 23 icons) ---------- */

const Axis = () => <path d="M.7 0V22.300H23" />;

const gallery: [string, React.ReactNode][] = [
  ["Stacked bar chart", <><path d="M1 3h6v5H1zM1 13h9v5H1z" fill="#fff" stroke={GS} /><path d="M7 3h8v5H7z" fill={B} stroke={BS} /><path d="M10 13h10v5H10z" fill={G} stroke={GS} /><Axis /></>],
  ["Stacked column chart", <><path d="M5 14h5v8H5zM15 11h5v11h-5z" fill="#fff" /><path d="M5 6h5v9H5z" fill={B} stroke={BS} /><path d="M15 2h5v9h-5z" fill={G} stroke={GS} /><Axis /></>],
  ["Clustered bar chart", <><path d="M1 6h12v5H1zM1 16h16v5H1z" fill="#fff" /><path d="M1 11h9v5H1z" fill={G} stroke={GS} /><path d="M1 1h20v5H1z" fill={B} stroke={BS} /><Axis /></>],
  ["Clustered column chart", <><path d="M7 9h4v13H7zM17 6h5v16h-5z" fill="#fff" /><path d="M11 12h5v10h-5z" fill={G} stroke={GS} /><path d="M2 1h5v21H2z" fill={B} stroke={BS} /><Axis /></>],
  ["100% stacked bar chart", <><path d="M1 3h4v5H1zM1 13h12v5H1z" fill="#fff" /><path d="M5 3h15v5H5z" fill={B} stroke={BS} /><path d="M13 13h7v5h-7z" fill={G} stroke={GS} /><Axis /></>],
  ["100% stacked column chart", <><path d="M5 17h5v5H5zM15 10h5v12h-5z" fill="#fff" /><path d="M5 2h5v15H5z" fill={B} stroke={BS} /><path d="M15 2h5v8h-5z" fill={G} stroke={GS} /><Axis /></>],
  ["Line chart", <><path d="M1 18L14 4l8 7" stroke="#2a87cb" /><path d="M1 13l8-8 7 7 6-7" /><Axis /></>],
  ["Area chart", <><path d="M12 8l5-8 6 14v8z" fill={G} stroke={GS} /><path d="M1 15L8 3l6 8-6 8z" fill="#fff" /><path d="M.5 22v-6l5 3 9-10 8 13z" fill={B} stroke={BS} /></>],
  ["Stacked area chart", <><path d="M1 15l6 5 9-7 6 5v4H1z" fill="#fff" stroke="none" /><path d="M1 4l7 6 7-6 7 3v11l-6-5-9 7-6-6z" fill={B} stroke={BS} /><Axis /></>],
  ["100% stacked area chart", <><path d="M1 15l6 4 9-6 7 5v4H1z" fill="#fff" stroke="none" /><path d="M1 3h21v15l-6-5-9 6-6-5z" fill={B} stroke={BS} /><Axis /></>],
  ["Line and stacked column chart", <><path d="M5 17h5v5H5zM15 10h5v12h-5z" fill="#fff" /><path d="M5 3h5v14H5z" fill={B} stroke={BS} /><path d="M15 3h5v7h-5z" fill={G} stroke={GS} /><path d="M2 19l8-7 5 5 7-8" /><Axis /></>],
  ["Line and clustered column chart", <><path d="M15 7h5v15h-5z" fill={G} stroke={GS} /><path d="M10 2h5v20h-5z" fill="#fff" /><path d="M5 11h5v11H5z" fill={B} stroke={BS} /><path d="M2 20l7-8 6 5 7-8" /><Axis /></>],
  ["Ribbon chart", <><path d="M1 13c8 0 12 6 21-1v7H1z" fill="#ffbf66" stroke="#d8730b" /><path d="M1 4c8 0 9 10 21 1v5c-8 6-12 3-21 2z" fill={G} stroke={GS} /><path d="M1 9c6 0 5 8 10 8s6-7 11-6v4c-5 0-6 4-11 4S6 14 1 14z" fill={B} stroke={BS} /><Axis /></>],
  ["Waterfall chart", <><path d="M4 7h5v15H4zM17 2h5v20h-5z" fill="#fff" /><path d="M9 7h4v6H9z" fill={G} stroke={GS} /><path d="M13 2h3v11h-3z" fill={B} stroke={BS} /><Axis /></>],
  ["Funnel", <g fill={B} stroke={BS}><path d="M.5 2h22v6H.5zM3.500 8h16v6h-16zM7.500 14h8v7h-8z" /></g>],
  ["Scatter chart", <><g stroke="none"><path d="M4 6h4v4H4zM10 9h4v4h-4zM16 14h4v4h-4z" fill={B} /><path d="M16 1h4v4h-4zM4 15h4v4H4z" fill={D} /></g><Axis /></>],
  ["Pie chart", <><circle cx="11.500" cy="11.500" r="10.800" fill="#fff" /><path d="M11.500 .7a10.800 10.800 0 018 18l-8-7z" fill={B} stroke={BS} /></>],
  ["Donut chart", <><circle cx="11.500" cy="11.500" r="10.800" fill={B} stroke={BS} /><path d="M11.500 .7A10.800 10.800 0 00.7 11.500h5.500a5.300 5.300 0 015.300-5.300z" fill="#fff" /><circle cx="11.500" cy="11.500" r="5.300" fill="#f3f2f1" /></>],
  ["Treemap", <><path d="M.7 .7h21.600v21.600H.7z" fill="#fff" /><path d="M1 1h10v11H1zM1 12h10v10H1z" fill={B} stroke={BS} /><path d="M11 7h11M16 7v15M16 15h6M11 1v21" /></>],
  ["Map", <><circle cx="13" cy="10" r="7" fill="#fff" /><path d="M8 6l4-2 2 3-3 4-3-2zM14 11l4-4 2 4-4 5z" fill="#2f9145" stroke="none" /><path d="M10 1C2 4 2 16 10 19c4 1 7 0 9-2M11 19v3M5 22.300h15" /></>],
  ["Filled map", <><path d="M1 1h3l2 1h7l2 1 4-2h3v11l-1 6-5 1-4 2-6-3-4-4z" fill={G} stroke={GS} /><path d="M1 1h8l1 5v5H3L1 6zM13 11h9l-1 7-5 1-5-1z" fill={B} stroke={BS} /><path d="M3 11l1 5 4 3 3 2" /></>],
  ["Azure map", <g stroke="none"><path d="M14 -1L1 21l10-5z" fill="#5cb8d8" /><path d="M14 -1l-3 17 9 8z" fill="#2f92cf" /></g>],
  ["Gauge", <><path d="M1 17C1 2 22 2 22 17h-6c0-6-9-6-9 0z" fill={B} stroke={BS} /><path d="M1 17C1 11 4 8 8 6.500L10 12c-2 1-3 2-3 5z" fill="#fff" /><path d="M10 17l7-6-4 7z" fill={D} /></>],
  ["Card", <><path d="M.7 3.500h21.600v16H.7z" fill="#fff" /><text x="11.500" y="14.500" textAnchor="middle" fontSize="10" fill="#2a87cb" stroke="none">123</text><path d="M3 17h17" stroke={GS} /></>],
  ["Multi-row card", <><path d="M.7 .7h21.600v21.600H.7z" fill="#fff" /><path d="M4 4v15M6 9h8M6 17h8" stroke={GS} /><path d="M6 6h13M6 14h13" stroke="#1a75c4" strokeWidth="2.400" /></>],
  ["KPI", <><path d="M.7 2h21.600v18H.7z" fill="#fff" /><path d="M3 13l4-8 4 8z" fill="#2f9145" stroke="none" /><path d="M12 5h8l-4 8z" fill="#d13438" stroke="none" /><path d="M3 16h17" stroke={GS} /></>],
  ["Slicer", <><path d="M13 22H.7V.7h21.600V10" fill="#fff" /><path d="M1 1h21v3H1z" fill={G} /><path d="M5 9h3v3H5zM5 15h3v3H5z" stroke={GS} fill={G} /><path d="M11 11h12c0 4-4 3-4 7v4h-3v-4c0-4-5-3-5-7z" fill="#fff" /></>],
  ["Table", <><path d="M.7 .7h21.600v21.600H.7z" fill="#fff" /><path d="M1 10h21M1 16h21M8 4v18M15 4v18" stroke={GS} /><path d="M1 1h21v3H1z" fill={G} /></>],
  ["Matrix", <><path d="M.7 .7h21.600v21.600H.7z" fill="#fff" /><path d="M15 4h7v18H1v-6h14z" fill={B} stroke="none" /><path d="M1 10h21M1 16h21M8 4v18M15 4v18" stroke={BS} strokeWidth="1" /><path d="M.7 .7h21.600v21.600H.7z" /><path d="M1 1h21v3H1z" fill={G} /></>],
  ["R script visual", <text x="10" y="18" textAnchor="middle" fontSize="20" fontWeight="700" fill="#2a87cb" stroke="none">R</text>],
  ["Python visual", <text x="11" y="17" textAnchor="middle" fontSize="19" fontWeight="700" fill="#2a87cb" stroke="none">Py</text>],
  ["Key influencers", <><path d="M1 4.500h15" stroke="#2a87cb" /><circle cx="18.500" cy="4.500" r="2.500" fill={B} stroke={BS} /><path d="M1 11h11M1 16h6" stroke={GS} /><circle cx="13" cy="11" r="1.500" /><circle cx="8" cy="16" r="1.500" /><Axis /></>],
  ["Decomposition tree", <><path d="M8 11h4M12 3v17M12 3h3M12 11h3M12 20h3" /><path d="M.5 9h8v4h-8zM14 1h8v5h-8zM14 9h8v5h-8zM14 17h8v5h-8z" fill={B} stroke={BS} /></>],
  ["Q&A", <path d="M.7 2h21.600v14H10l-5 5v-5H.7z" fill="#fff" stroke="#1a75c4" />],
  ["Smart narrative", <><path d="M3 12v10h16V7l-6-6H4v5M13 1v6h6" /><circle cx="3" cy="9" r="2.500" fill={B} stroke={BS} /><path d="M8 11h7M6 15h7" stroke="#2a87cb" /></>],
  ["Goals", <><path d="M5 2h13v8c0 7-13 7-13 0zM5 4H1c0 6 2 8 5 8M18 4h4c0 6-2 8-5 8M11.500 15v4" fill="#fff" /><path d="M5 1h13v3H5zM6 20h11v2.500H6z" fill={B} stroke={BS} /></>],
  ["Paginated report", <><path d="M2 0h13l6 6v17H2zM14 0v7h7" fill="#fff" /><path d="M7 20v-6M12 20v-3M17 20v-8" strokeWidth="3" /></>],
  ["New card", <><path d="M1 5h21.300v16H1z" fill="#fff" /><text x="13" y="16" textAnchor="middle" fontSize="10" fill="#2a87cb" stroke="none">123</text><path d="M4 18.500h16" stroke={GS} /><path d="M4 0h6L8 5h3L2 15l2-7H0z" fill="#ffc966" stroke="#d8730b" /></>],
  ["New slicer", <><path d="M12 1h9v8h-9zM1 13h8v8H1z" stroke={GS} fill="#fff" /><path d="M11 13h12c0 4-4 3-4 7v3h-3v-3c0-4-5-3-5-7z" fill="#fff" /><path d="M4 0h6L8 5h3L2 15l2-7H0z" fill="#ffc966" stroke="#d8730b" /></>],
  ["ArcGIS map", <><path d="M2 1h20v12h-5v9H2z" fill="#dcecf9" stroke="#1a75c4" /><path d="M9 22c5-3 0-7 4-9s2-7 9-8" stroke={B} strokeWidth="4" /><path d="M7 22c5-3 0-8 4-10s2-7 9-9M12 22c4-3 0-6 4-8s2-6 6-7" stroke="#1a75c4" strokeWidth="1" /><path d="M-1 3c0-4 9-4 9 0v4l-4.500 7L-1 7z" fill="#d8730b" stroke="none" /><circle cx="3.500" cy="4.500" r="1.700" fill="#fff" stroke="none" /><circle cx="19" cy="20" r="3.500" fill="#d8730b" stroke="#f3f2f1" strokeWidth="1" /></>],
  ["Power Apps", <g stroke="#8b2f9c" fill="#fff"><path d="M7.500 2.500L11.500 7l4-4.500L22 11.500l-6.500 9-4-4.500-4 4.500L1 11.500z" /><path d="M7.500 2.500L15 11.500l-7.500 9M15.500 2.500L8 11.500l7.500 9M7.500 2.500h3l2 2M15.500 20.500h-3" fill="none" strokeWidth="1.200" /></g>],
  ["Power Automate", <g stroke="#2a7fdb" fill="#fff"><path d="M1 2h15l6 9-6 10H9l6-10L9 6H4z" /><path d="M1 21L11 7l4 4-7 10z" /></g>],
];

function Toggle({ label, on }: { label: string; on: boolean }) {
  return (
    <label className="flex h-[22px] cursor-pointer items-center justify-between pl-[11px] pr-5">
      {label}
      <input type="checkbox" defaultChecked={on} className="peer sr-only" />
      {on ? (
        <span className="flex h-5 w-10 items-center justify-between rounded-full bg-[#117865] pl-1.5 pr-[5px] text-[11px] leading-5 text-white">
          On<span className="size-[10px] rounded-full bg-white" />
        </span>
      ) : (
        <span className="flex h-5 w-10 items-center justify-between rounded-full border border-[#8a8886] bg-white pl-[5px] pr-[5px] text-[11px] leading-5 text-[#605e5c]">
          <span className="size-[10px] rounded-full bg-[#605e5c]" />Off
        </span>
      )}
    </label>
  );
}

function VisualizationsPane() {
  return (
    <aside className="flex w-[226px] shrink-0 flex-col border-l border-[#dcdad8] bg-[#f3f2f1] text-sm text-[#252423]">
      <div className="flex h-[50px] items-center justify-between pl-2.5 pr-1.5">
        <h2 className="text-[17px] font-semibold">Visualizations</h2>
        <button type="button" aria-label="Collapse visualizations"><ChevronsRight size={24} strokeWidth={1.500} /></button>
      </div>
      <h3 className="pl-2.5 text-sm font-semibold leading-4">Build visual</h3>
      <div className="mt-1.5 flex gap-[42px] pl-2.5">
        <button type="button" aria-label="Build visual" className="flex size-10 items-center justify-center rounded-[3px] bg-[#d2d0ce]">
          <svg viewBox="0 0 30 30" className="size-[30px]" fill="#117865" stroke="#222" aria-hidden="true">
            <path d="M0 1h24" />
            <path d="M.5 7h29v8H.5zM.5 21h29v8H.5z" strokeDasharray="2 2" strokeWidth="2" />
          </svg>
        </button>
        <button type="button" aria-label="Format visual" className="flex size-10 items-center justify-center">
          <svg viewBox="0 0 32 32" className="size-8" fill="none" stroke="#252423" strokeWidth="1.400" aria-hidden="true">
            <path d="M6 30H1V1h14l8 8v3M14 1v9h9" />
            <path d="M31 11c-6 3-10 7-13 12l3 3c4-4 7-9 10-15zM18 24c-4-1-4 4-10 6 5 2 13 2 13-3" fill="#fff" />
          </svg>
        </button>
      </div>
      <div className="mt-1.5 flex items-end" aria-hidden="true">
        <span className="h-px w-5 bg-[#8a8886]" />
        <svg viewBox="0 0 20 10" className="h-2.5 w-5" fill="none" stroke="#8a8886"><path d="M0 9.500L10 .5l10 9" /></svg>
        <span className="h-px grow bg-[#8a8886]" />
      </div>
      <div className="grid grid-cols-[repeat(6,23px)] gap-3 pl-[14px] pt-[14px]">
        {gallery.map(([name, art]) => (
          <button key={name} type="button" title={name} aria-label={name}>
            <svg viewBox="0 0 23 23" className="block size-[23px] overflow-visible" fill="none" stroke={D} strokeWidth="1.300" aria-hidden="true">
              {art}
            </svg>
          </button>
        ))}
      </div>
      <div className="h-[46px] border-b border-[#dcdad8] pl-4 pt-5">
        <button type="button" aria-label="More visuals" className="flex gap-1.5">
          <span className="size-0.5 bg-[#222]" /><span className="size-0.5 bg-[#222]" /><span className="size-0.5 bg-[#222]" />
        </button>
      </div>
      <div className="flex flex-col pl-[5px] pr-[7px] pt-3 leading-5">
        <h4 className="pl-2.5">Values</h4>
        <button type="button" className="mt-1.5 h-[34px] rounded-sm border border-dashed border-[#c0bebc] bg-white pl-2.5 text-left">Add data fields here</button>
        <div className="mt-11"><Toggle label="Cross-report" on={false} /></div>
        <div className="relative mt-3">
          <Toggle label="Keep all filters" on />
          <div role="tooltip" className="absolute -top-[132px] right-[82px] z-20 h-[110px] w-[330px] bg-white px-[15px] py-4 text-sm leading-5 text-[#484644] shadow-[0_4px_20px_rgba(0,0,0,0.25)]">
            <strong className="block font-bold">Keep all filters</strong>
            Drill through to this page with all filters applied to the visual or just the filters applied to fields listed below.
            <svg viewBox="0 0 16 8" className="absolute right-[18px] top-full h-2 w-4" fill="#fff" aria-hidden="true"><path d="M0 0h16L8 8z" /></svg>
          </div>
        </div>
        <button type="button" className="mt-3 h-8 whitespace-nowrap rounded-sm border border-dashed border-[#c0bebc] bg-white pl-2.5 text-left">Add drill-through fields here</button>
      </div>
    </aside>
  );
}

const tables = ["customer", "Employees", "Office", "Order details", "Orders", "Payment", "Power bi", "ProductLine", "Products", "Student_grade", "Table"];

function DataPane() {
  return (
    <aside className="flex w-[219px] shrink-0 flex-col overflow-hidden border-l border-[#dcdad8] bg-[#f3f2f1] text-sm text-[#323130]">
      <div className="-mr-0.5 flex h-[50px] items-center justify-between pl-2.5">
        <h2 className="text-[17px] font-semibold text-[#252423]">Data</h2>
        <button type="button" aria-label="Collapse data"><ChevronsRight size={24} strokeWidth={1.500} /></button>
      </div>
      <label className="-mr-1 ml-[5px] mt-[7px] flex h-[30px] items-center gap-2 rounded border border-b-2 border-[#d2d0ce] border-b-[#605e5c] bg-white pl-[15px]">
        <Search size={18} strokeWidth={1.400} className="shrink-0" color="#605e5c" />
        <input type="search" aria-label="Search data" placeholder="Search" className="w-full bg-transparent text-base outline-none placeholder:text-[#797775]" />
      </label>
      <ul className="mt-[11px]">
        {tables.map((t) => (
          <li key={t}>
            <button type="button" className="flex h-[30px] items-center pl-[13px]">
              <ChevronRight size={20} strokeWidth={1.400} />
              <svg viewBox="0 0 16 16" className="ml-[3px] size-4" fill="none" stroke="#323130" strokeWidth="1.300" aria-hidden="true">
                <rect x="1" y="1" width="14" height="14" rx="2.500" />
                <path d="M1 5.500h14M1 10.500h14M5.500 1v14M10.500 1v14" />
              </svg>
              <span className="ml-[7px]">{t}</span>
            </button>
          </li>
        ))}
      </ul>
    </aside>
  );
}

function PageTabs() {
  const tab = "flex h-11 w-24 shrink-0 items-center justify-center border-r border-[#c8c6c4] bg-white text-sm";
  return (
    <div className="flex h-[45px] shrink-0 bg-[#f3f2f1] text-[#252423]">
      <button type="button" aria-label="Desktop layout" className="ml-[13px] flex w-[30px] flex-col items-center pt-[9px]">
        <svg viewBox="0 0 24 19" className="h-[19px] w-6" fill="none" stroke="#484644" strokeWidth="1.500" aria-hidden="true">
          <path d="M1 1h22v12H1zM12 13v4M8 17.500h8" />
        </svg>
        <span className="mt-[7px] h-[3px] w-full rounded-full bg-[#117865]" />
      </button>
      <button type="button" aria-label="Mobile layout" className="ml-[31px] flex pt-1.5">
        <svg viewBox="0 0 17 26" className="h-[26px] w-[17px]" fill="none" stroke="#484644" strokeWidth="1.500" aria-hidden="true">
          <rect x="1" y="1" width="15" height="24" rx="1.500" />
          <path d="M7 21.500h3" />
        </svg>
      </button>
      <button type="button" aria-label="Previous page" className="ml-[26px] pb-1">
        <svg viewBox="0 0 6 10" className="h-2.5 w-1.5" fill="#c0bebc" aria-hidden="true"><path d="M6 0v10L0 5z" /></svg>
      </button>
      <button type="button" aria-label="Next page" className="ml-[22px] mr-2 pb-1">
        <svg viewBox="0 0 6 10" className="h-2.5 w-1.5" fill="#c0bebc" aria-hidden="true"><path d="M0 0v10l6-5z" /></svg>
      </button>
      <button type="button" className={`${tab} border-l`}>Page 1</button>
      <div className={`${tab} relative`}>
        <button type="button" className="size-full border-b-[5px] border-[#117865] pt-1 font-semibold">Page 2</button>
        <button type="button" aria-label="Close Page 2" className="absolute right-[5px] top-0.5 text-[13px] font-semibold leading-5">x</button>
      </div>
      <button type="button" className={tab}>Tooltip</button>
      <button type="button" className={tab}>Page 3</button>
      <button type="button" aria-label="New page" className="flex h-11 w-[49px] items-center justify-center bg-[#117865]">
        <svg viewBox="0 0 12 12" className="size-3" stroke="#fff" strokeWidth="3" aria-hidden="true"><path d="M6 0v12M0 6h12" /></svg>
      </button>
    </div>
  );
}

function StatusBar() {
  return (
    <footer className="flex h-[27px] shrink-0 items-center border-t border-[#dcdad8] bg-[#f3f2f1] text-sm text-[#605e5c]">
      <span className="-ml-2 whitespace-nowrap pt-1">Page 2 of 4</span>
      <div className="ml-auto flex items-center pr-[15px] pt-0.5">
        <button type="button" aria-label="Zoom out" className="h-0.5 w-1.5 bg-[#605e5c]" />
        <input
          type="range"
          aria-label="Zoom"
          min={0}
          max={100}
          defaultValue={40}
          className="mx-1.5 h-[13px] w-[125px] appearance-none bg-[linear-gradient(#605e5c,#605e5c),linear-gradient(#605e5c,#605e5c)] bg-[length:100%_1px,1px_7px] bg-[position:center,50%_50%] bg-no-repeat [&::-webkit-slider-thumb]:h-[13px] [&::-webkit-slider-thumb]:w-[5px] [&::-webkit-slider-thumb]:appearance-none [&::-webkit-slider-thumb]:bg-[#605e5c]"
        />
        <button type="button" aria-label="Zoom in">
          <svg viewBox="0 0 10 10" className="size-2.5" stroke="#605e5c" strokeWidth="1.800" aria-hidden="true"><path d="M5 0v10M0 5h10" /></svg>
        </button>
        <span className="ml-4">83%</span>
        <button type="button" aria-label="Fit to page" className="ml-6">
          <svg viewBox="0 0 21 16" className="h-4 w-[21px]" fill="none" stroke="#484644" strokeWidth="1.300" aria-hidden="true">
            <path d="M1 1h19v14H1zM4 6V4h3M14 4h3v2M17 10v2h-3M7 12H4v-2" />
          </svg>
        </button>
      </div>
    </footer>
  );
}

export default function App() {
  return (
    <div className="flex min-h-screen flex-col overflow-hidden bg-[#f3f2f1] font-['Open_Sans',sans-serif]">
      <TitleBar />
      <MenuTabs />
      <Ribbon />
      <div className="flex grow">
        <LeftRail />
        <div className="flex min-w-0 grow flex-col">
          <div className="flex grow overflow-hidden bg-white">
            <main className="mx-[25px] flex grow justify-between bg-[#6ebeff] pb-3 pl-5 pr-[27px] pt-[31px] shadow-[0_0_14px_rgba(0,0,0,0.25)]">
              <div className="flex w-[437px] flex-col gap-[18px]">
                <Card title="Count of customerNumber by city" pad="pb-[5px] pl-[5px] pr-1.5 pt-1.5"><CityMap /></Card>
                <Card title="Count of customerNumber by country" pad="pb-[5px] pl-[5px] pr-1.5 pt-1.5"><CountryMap /></Card>
              </div>
              <div className="flex w-[437px] flex-col gap-[18px]">
                <Card title="Sum of quantityOrdered by productLine" pad="px-1.5 py-[5px]"><Treemap /></Card>
                <Card title="Sum of quantityOrdered by Order_Year" pad=""><YearChart /></Card>
              </div>
            </main>
            <aside className="flex w-[41px] shrink-0 flex-col items-center border-l border-[#a19f9d] bg-white pt-3 text-[#252423]">
              <button type="button" aria-label="Expand filters"><ChevronsLeft size={24} strokeWidth={1.500} /></button>
              <svg viewBox="0 0 16 16" className="ml-1.5 mt-[15px] size-4" fill="none" stroke="#252423" strokeWidth="1.500" aria-hidden="true">
                <path d="M15 1v14L8 10H1V6h7z" />
              </svg>
              <h2 className="mt-2 text-lg font-semibold [writing-mode:vertical-rl]">Filters</h2>
            </aside>
          </div>
          <PageTabs />
        </div>
        <VisualizationsPane />
        <DataPane />
      </div>
      <StatusBar />
    </div>
  );
}
